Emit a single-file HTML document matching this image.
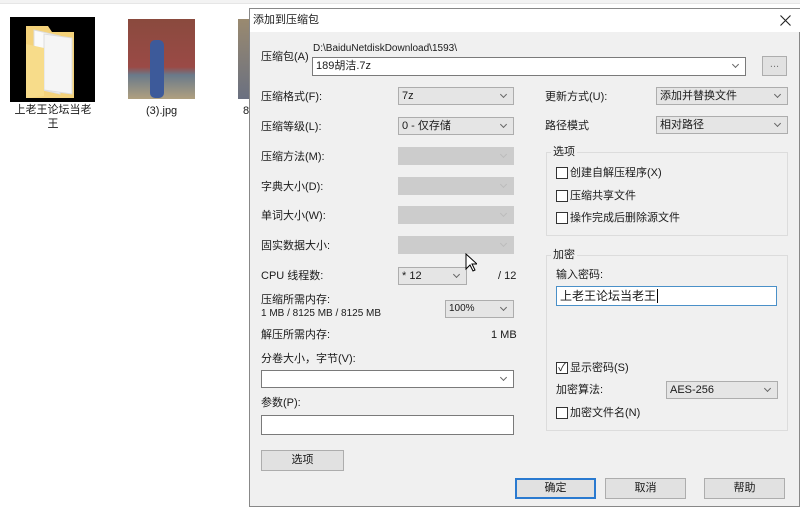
<!DOCTYPE html>
<html><head><meta charset="utf-8"><style>
*{margin:0;padding:0;box-sizing:border-box}
body{width:800px;height:507px;overflow:hidden;background:#fff;position:relative;font-family:"Liberation Sans","Noto Sans CJK SC",sans-serif;font-size:11px;color:#1a1a1a}
.a{position:absolute;white-space:nowrap;line-height:14px}
.dd{position:absolute;height:18px;border:1px solid #adadad;background:#e5e5e5;padding-left:3px;line-height:16px;font-size:11px}
.dd:after{content:"";position:absolute;right:7px;top:4px;width:4px;height:4px;border-right:1px solid #666;border-bottom:1px solid #666;transform:rotate(45deg)}
.dis{background:#cccccc;border-color:#cccccc}
.dis:after{border-color:#bbb}
.wh{background:#fff;border-color:#7a7a7a}
.in{position:absolute;background:#fff;border:1px solid #7a7a7a}
.btn{position:absolute;height:21px;border:1px solid #adadad;background:#e1e1e1;text-align:center;line-height:19px}
.cb{position:absolute;width:12px;height:12px;border:1px solid #333;background:#fff}
.gb{position:absolute;border:1px solid #dcdcdc}
.gl{position:absolute;background:#f0f0f0;padding:0 2px;line-height:14px}
</style></head><body>
<div style="position:absolute;left:0;top:0;width:800px;height:4px;background:#f3f3f3;border-bottom:1px solid #e6e6e6"></div>
<div style="position:absolute;left:10px;top:17px;width:85px;height:85px;background:#000"></div>
<svg style="position:absolute;left:22px;top:24px" width="60" height="76"><path d="M4 2h22l4 6h22v66H4z" fill="#f4d27a"/><path d="M12 6l26 6v58l-26-6z" fill="#fafafa" stroke="#ddd"/><path d="M22 10l28 4v56l-28-4z" fill="#f5f5f5" stroke="#ddd"/><path d="M4 20l18 4v48L4 74z" fill="#f7dc8a"/></svg>
<div class="a" style="left:12px;top:103px;width:82px;text-align:center;white-space:normal;line-height:14px">上老王论坛当老王</div>
<div style="position:absolute;left:128px;top:19px;width:67px;height:80px;background:linear-gradient(#8a4a3e 0,#9a4a46 60%,#6a7a8a 70%,#b0a080 100%)"></div>
<div style="position:absolute;left:150px;top:40px;width:14px;height:58px;background:#3d5a9a;border-radius:5px"></div>
<div class="a" style="left:146px;top:104px">(3).jpg</div>
<div style="position:absolute;left:238px;top:19px;width:12px;height:80px;background:linear-gradient(#9a8a70,#6a7080)"></div>
<div class="a" style="left:243px;top:104px">8</div>
<div style="position:absolute;left:249px;top:8px;width:551px;height:499px;background:#f0f0f0;border:1px solid #888"></div>
<div style="position:absolute;left:250px;top:9px;width:550px;height:23px;background:#fff"></div>
<div class="a" style="left:253px;top:13px">添加到压缩包</div>
<svg style="position:absolute;left:780px;top:15px" width="11" height="11"><path d="M0.5 0.5L10.5 10.5M10.5 0.5L0.5 10.5" stroke="#222" stroke-width="1.1"/></svg>
<div class="a" style="left:261px;top:50px">压缩包(A)</div>
<div class="a" style="left:313px;top:42px;font-size:10px">D:\BaiduNetdiskDownload\1593\</div>
<div class="dd wh" style="left:312px;top:57px;width:434px;height:19px">189胡洁.7z</div>
<div class="btn" style="left:762px;top:56px;width:25px;height:20px;line-height:14px;color:#777">...</div>

<div class="a" style="left:261px;top:90px">压缩格式(F):</div>
<div class="a" style="left:261px;top:120px">压缩等级(L):</div>
<div class="a" style="left:261px;top:150px">压缩方法(M):</div>
<div class="a" style="left:261px;top:180px">字典大小(D):</div>
<div class="a" style="left:261px;top:209px">单词大小(W):</div>
<div class="a" style="left:261px;top:239px">固实数据大小:</div>
<div class="a" style="left:261px;top:269px">CPU 线程数:</div>
<div class="a" style="left:261px;top:293px">压缩所需内存:</div>
<div class="a" style="left:261px;top:307px;font-size:10px">1 MB / 8125 MB / 8125 MB</div>
<div class="a" style="left:261px;top:328px">解压所需内存:</div>
<div class="a" style="left:491px;top:328px">1 MB</div>
<div class="a" style="left:261px;top:352px">分卷大小，字节(V):</div>
<div class="a" style="left:261px;top:396px">参数(P):</div>

<div class="dd" style="left:398px;top:87px;width:116px">7z</div>
<div class="dd" style="left:398px;top:117px;width:116px">0 - 仅存储</div>
<div class="dd dis" style="left:398px;top:147px;width:116px"></div>
<div class="dd dis" style="left:398px;top:177px;width:116px"></div>
<div class="dd dis" style="left:398px;top:206px;width:116px"></div>
<div class="dd dis" style="left:398px;top:236px;width:116px"></div>
<div class="dd" style="left:398px;top:267px;width:69px">* 12</div>
<div class="a" style="left:498px;top:269px">/ 12</div>
<div class="dd" style="left:445px;top:300px;width:69px;font-size:10px">100%</div>
<div class="dd wh" style="left:261px;top:370px;width:253px"></div>
<div class="in" style="left:261px;top:415px;width:253px;height:20px"></div>
<div class="btn" style="left:261px;top:450px;width:83px">选项</div>
<svg style="position:absolute;left:465px;top:253px" width="12" height="20"><path d="M1 1v15l4-4 3 6 2-1-3-6h5z" fill="#fff" stroke="#000"/></svg>

<div class="a" style="left:545px;top:90px">更新方式(U):</div>
<div class="dd" style="left:656px;top:87px;width:132px">添加并替换文件</div>
<div class="a" style="left:545px;top:119px">路径模式</div>
<div class="dd" style="left:656px;top:116px;width:132px">相对路径</div>

<div class="gb" style="left:546px;top:152px;width:242px;height:84px"></div>
<div class="gl" style="left:551px;top:145px">选项</div>
<div class="cb" style="left:556px;top:167px"></div><div class="a" style="left:570px;top:166px">创建自解压程序(X)</div>
<div class="cb" style="left:556px;top:190px"></div><div class="a" style="left:570px;top:189px">压缩共享文件</div>
<div class="cb" style="left:556px;top:212px"></div><div class="a" style="left:570px;top:211px">操作完成后删除源文件</div>

<div class="gb" style="left:546px;top:255px;width:242px;height:176px"></div>
<div class="gl" style="left:551px;top:248px">加密</div>
<div class="a" style="left:556px;top:268px">输入密码:</div>
<div style="position:absolute;left:556px;top:286px;width:221px;height:20px;background:#fff;border:1px solid #4a90c8;padding-left:3px;line-height:18px;font-size:12px">上老王论坛当老王<span style="border-left:1px solid #000;margin-left:1px"></span></div>
<div class="cb" style="left:556px;top:362px;font-size:11px;line-height:10px;text-align:center">✓</div><div class="a" style="left:570px;top:361px">显示密码(S)</div>
<div class="a" style="left:556px;top:383px">加密算法:</div>
<div class="dd" style="left:666px;top:381px;width:112px">AES-256</div>
<div class="cb" style="left:556px;top:407px"></div><div class="a" style="left:570px;top:406px">加密文件名(N)</div>

<div class="btn" style="left:515px;top:478px;width:81px;border:2px solid #2a7ad0;line-height:17px">确定</div>
<div class="btn" style="left:605px;top:478px;width:81px">取消</div>
<div class="btn" style="left:704px;top:478px;width:81px">帮助</div>
</body></html>
